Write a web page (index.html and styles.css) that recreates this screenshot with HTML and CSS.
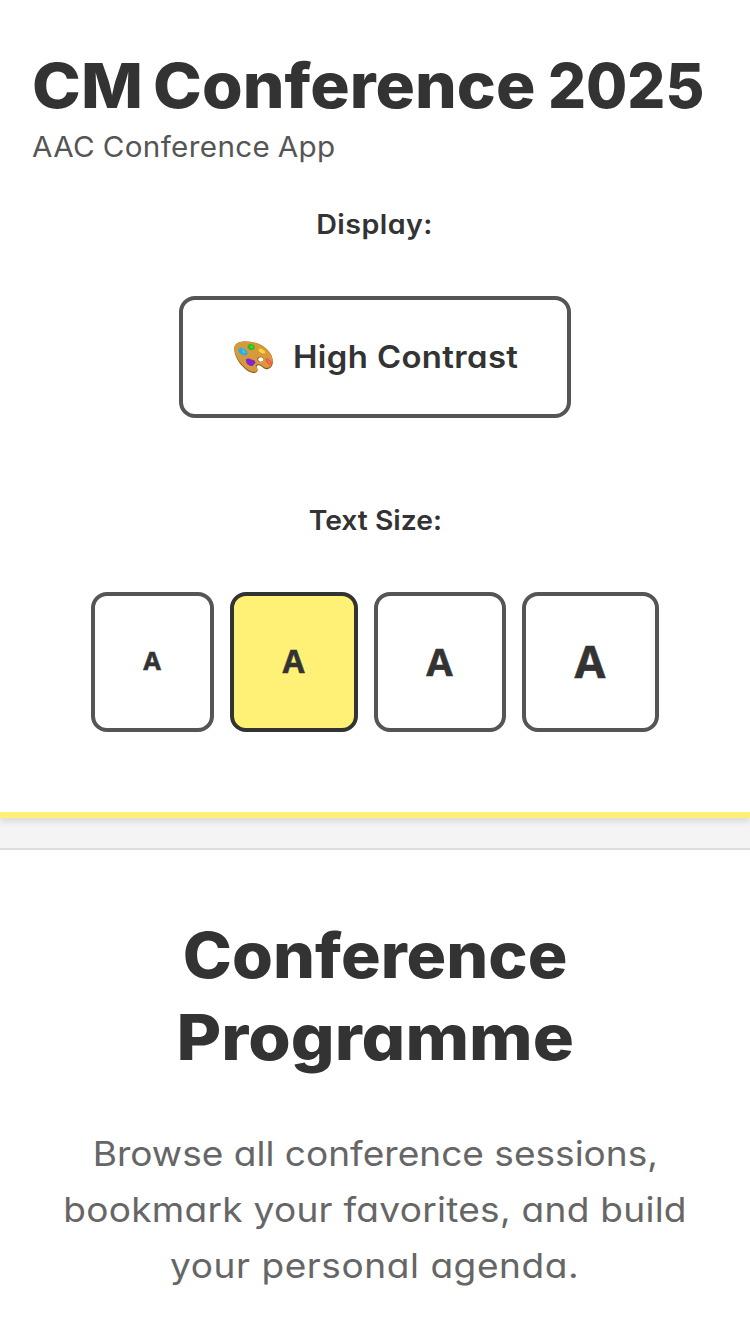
FILE: index.html
```html
<!DOCTYPE html>
<html lang="en">
<head>
<meta charset="utf-8">
<title>CM Conference 2025</title>
<link rel="stylesheet" href="styles.css">
</head>
<body>
<header class="header">
  <h1 class="title"><span class="name">CM Conference</span> <span class="year">2025</span></h1>
  <p class="subtitle">AAC Conference App</p>
  <div class="group">
    <span class="label label-display">Display:</span>
    <button class="contrast">
      <svg class="palette" viewBox="39 46 122 100" aria-hidden="true">
        <path d="M43 62C50 46 76 45 105 51C141 61 163 90 158 116C154 133 138 135 128 126C118 116 108 118 110 127C116 135 112 144 98 143C73 139 35 94 43 62Z" fill="#8f571e"/>
        <path d="M43 61C51 45 76 45 105 51C141 61 162 88 157 112C153 129 139 131 129 123C119 113 105 115 108 124C116 132 112 141 98 139C74 135 36 90 43 61Z" fill="#d69a3c"/>
        <ellipse cx="121" cy="101" rx="9" ry="7" fill="#7c491c"/>
        <ellipse cx="122" cy="102" rx="8" ry="6.5" fill="#fff"/>
        <path d="M54 70L64 65L69 70L79 75L83 84L75 91L62 86L55 79Z" fill="#28aee0"/>
        <path d="M64 70L76 80L70 82Z" fill="#65cdf0"/>
        <path d="M82 59L89 54L100 57L105 66L99 74L89 73L82 67Z" fill="#2fbd27"/>
        <path d="M90 61L98 63L96 69Z" fill="#77df45"/>
        <path d="M115 71L123 69L134 76L136 83L127 84L117 78Z" fill="#ffd72e"/>
        <path d="M76 102L84 98L92 101L103 105L106 111L98 121L90 122L80 115Z" fill="#8425cc"/>
        <path d="M136 98L143 98L154 107L156 117L147 119L138 109Z" fill="#f4544b"/>
        <path d="M140 101L151 111L149 115Z" fill="#ff8975"/>
      </svg>
      <span class="contrast-text">High Contrast</span>
    </button>
  </div>
  <div class="group group-size">
    <span class="label label-size">Text Size:</span>
    <div class="sizes">
      <button class="size size-s">A</button>
      <button class="size size-m active">A</button>
      <button class="size size-l">A</button>
      <button class="size size-xl">A</button>
    </div>
  </div>
</header>
<main class="hero">
  <h2 class="heading"><span class="heading-top">Conference</span><br><span class="heading-bottom">Programme</span></h2>
  <p class="intro"><span class="line line-first">Browse all conference sessions,</span><span class="line line-middle">bookmark your favorites, and build</span><span class="line line-last">your personal agenda.</span></p>
</main>
</body>
</html>
```
FILE: styles.css
```css
* { box-sizing: border-box; margin: 0; padding: 0; }
body { background: #f4f4f4; color: #333; font-family: Inter, "Open Sans", sans-serif; font-feature-settings: "cv11" 1; height: 1334px; overflow: hidden; }
.header { position: relative; height: 818px; padding: 44px 32px 0; background: #fff; border-bottom: 6px solid #fff176; box-shadow: 0 4px 6px rgba(0,0,0,.1); }
.title { font-size: 62.5px; font-weight: 800; line-height: 82px; white-space: nowrap; }
.name, .year { display: inline-block; transform-origin: left; }
.name { word-spacing: -4px; transform: scaleX(1.052); }
.year { margin-left: 24px; transform: scaleX(.955); }
.subtitle { width: max-content; padding-top: 1px; font-size: 27.8px; line-height: 40px; color: #555; letter-spacing: .35px; word-spacing: -1px; transform: scaleX(1.065); transform-origin: left; }
.group { display: flex; flex-direction: column; align-items: center; margin-top: 35px; }
.group-size { margin-top: 80px; }
.label { font-size: 27.3px; font-weight: 600; line-height: 46px; }
.label-display { letter-spacing: .4px; transform: scaleX(1.05); }
.label-size { transform: scaleX(1.035); }
.contrast { display: flex; align-items: center; gap: 19px; width: 392px; height: 122px; margin-top: 48px; padding: 0 0 0 50px; border: 4px solid #555; border-radius: 16px; background: #fff; color: #333; font: 600 31px/40px Inter, sans-serif; font-feature-settings: "cv11" 1; white-space: nowrap; }
.contrast-text { letter-spacing: .35px; transform: scaleX(1.06); transform-origin: left; }
.palette { width: 41px; height: 33px; flex: none; }
.sizes { display: flex; gap: 16px; margin-top: 48px; }
.size { height: 140px; padding: 0 1px 3px 0; border: 4px solid #555; border-radius: 16px; background: #fff; color: #333; font-family: "Open Sans", sans-serif; font-weight: 700; -webkit-text-stroke: .5px #333; }
.size-s { width: 123px; font-size: 25.6px; }
.size-m { width: 128px; font-size: 32px; }
.size-l { width: 132px; font-size: 38.4px; }
.size-xl { width: 137px; font-size: 44.8px; }
.active { background: #fff176; border-color: #333; }
.hero { height: 486px; margin-top: 30px; padding-top: 64px; border-top: 2px solid #ddd; background: #fff; text-align: center; }
.heading { font-size: 63px; font-weight: 800; line-height: 82px; }
.heading-top, .heading-bottom { display: inline-block; }
.heading-top { transform: scaleX(1.05); }
.heading-bottom { transform: scaleX(1.09); }
.intro { display: flex; flex-direction: column; align-items: center; margin-top: 48px; font-size: 34px; line-height: 56px; color: #666; white-space: nowrap; }
.line { transform: scaleX(1.09); }
.line-middle { letter-spacing: .24px; }
.line-last { letter-spacing: .5px; }
```
